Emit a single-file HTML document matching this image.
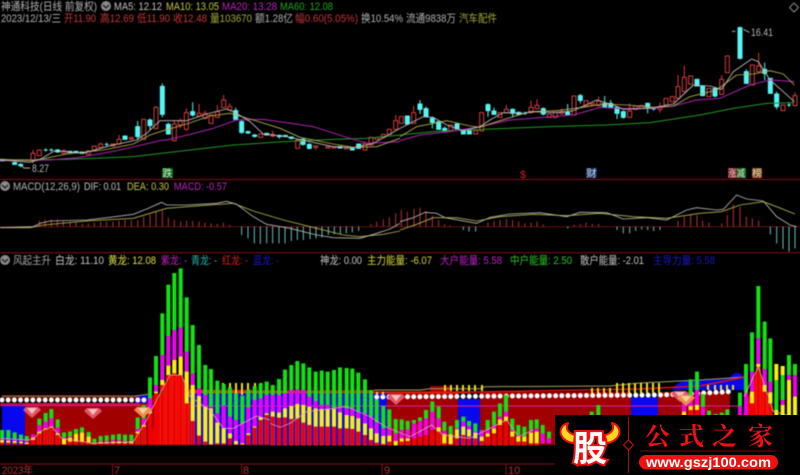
<!DOCTYPE html>
<html><head><meta charset="utf-8"><style>
html,body{margin:0;padding:0;background:#000;width:800px;height:475px;overflow:hidden}
svg{display:block}
text{font-family:"Liberation Sans","Noto Sans CJK SC",sans-serif;font-size:11px}
.b{filter:blur(.4px)}
path,polyline{fill:none;stroke-linejoin:round}
</style></head><body>
<svg width="800" height="475" viewBox="0 0 800 475">
<rect width="800" height="475" fill="#000"/>
<g class="b">
<!-- separators -->
<path d="M0 179.5H800M0 252.7H800M0 464H800" stroke="#8a1010" stroke-width="1"/>
<path d="M0 226.7H800" stroke="#6a1010" stroke-width="1"/>
<path d="M112.5 464V475M241.7 464V475M382 464V475M506 464V475" stroke="#8a1010"/>

<!-- header text -->
<text x="1" y="10" textLength="96" lengthAdjust="spacingAndGlyphs" fill="#b4b4b4">神通科技(日线 前复权)</text>
<circle cx="106" cy="6" r="5" fill="#8a8a8a"/><path d="M103 5l3 3 3-3" stroke="#222" stroke-width="1.3"/>
<text x="114" y="10" textLength="48" lengthAdjust="spacingAndGlyphs" fill="#c4c4c4">MA5: 12.12</text>
<text x="166" y="10" textLength="53" lengthAdjust="spacingAndGlyphs" fill="#c8c840">MA10: 13.05</text>
<text x="222" y="10" textLength="55" lengthAdjust="spacingAndGlyphs" fill="#c020c0">MA20: 13.28</text>
<text x="280" y="10" textLength="53" lengthAdjust="spacingAndGlyphs" fill="#20a820">MA60: 12.08</text>
<text x="1" y="22" textLength="60" lengthAdjust="spacingAndGlyphs" fill="#b4b4b4">2023/12/13/三</text>
<text x="64" y="22" textLength="32" lengthAdjust="spacingAndGlyphs" fill="#c83434">开11.90</text>
<text x="100" y="22" textLength="34" lengthAdjust="spacingAndGlyphs" fill="#c83434">高12.69</text>
<text x="137" y="22" textLength="33" lengthAdjust="spacingAndGlyphs" fill="#c83434">低11.90</text>
<text x="173" y="22" textLength="34" lengthAdjust="spacingAndGlyphs" fill="#c83434">收12.48</text>
<text x="210" y="22" textLength="42" lengthAdjust="spacingAndGlyphs" fill="#a8a838">量103670</text>
<text x="255" y="22" textLength="38" lengthAdjust="spacingAndGlyphs" fill="#b4b4b4">额1.28亿</text>
<text x="295" y="22" textLength="63" lengthAdjust="spacingAndGlyphs" fill="#c83434">幅0.60(5.05%)</text>
<text x="361" y="22" textLength="42" lengthAdjust="spacingAndGlyphs" fill="#b4b4b4">换10.54%</text>
<text x="406" y="22" textLength="50" lengthAdjust="spacingAndGlyphs" fill="#b4b4b4">流通9838万</text>
<text x="459" y="22" textLength="38" lengthAdjust="spacingAndGlyphs" fill="#a8a838">汽车配件</text>

<!-- Top chart, left half -->
<g transform="scale(.33333)" stroke-width="3">
<path stroke="#d83a3a" d="M99 450V490M192 448V462M265 450V466M302 428V445M357 405V434M394 410V420M468 318V388M523 360V425M541 355V385M559 325V392M597 312V350M615 332V358M652 315V354M671 285V325M689 310V332M818 392V412M947 436V450M1187 345V390M1095 425V452"/>
<path stroke="#d83a3a" style="fill:#000" d="M93 460h12v20h-12zM112 450h12v17h-12zM186 452h12v8h-12zM259 453h12v10h-12zM277 438h12v15h-12zM296 432h12v11h-12zM333 432h12v6h-12zM351 418h12v14h-12zM388 413h12v4h-12zM425 358h12v60h-12zM462 322h12v63h-12zM517 372h12v50h-12zM535 362h12v13h-12zM553 338h12v50h-12zM591 340h12v8h-12zM609 340h12v15h-12zM627 345h12v25h-12zM646 335h12v17h-12zM665 300h12v23h-12zM683 320h12v10h-12zM776 402h12v10h-12zM812 403h12v5h-12zM887 420h12v25h-12zM941 438h12v4h-12zM978 440h12v4h-12zM996 440h12v4h-12zM1033 443h12v4h-12zM1089 430h12v20h-12zM1107 412h12v23h-12zM1125 412h12v6h-12zM1144 403h12v9h-12zM1162 388h12v15h-12zM1181 362h12v26h-12z"/>
<path stroke="#54f4f4" d="M413 363V420M450 355V390M487 250V352M505 368V404M578 307V350M707 323V362M725 360V402M744 392V402M764 402V413M131 450h12M137 445v10M148 450h12M154 445v10M173 447v11M314 433h12M320 428v11M838 404v12M874 410v8M909 415v22M928 430v18M0 480h12M44 485v10M62 490v12"/>
<path stroke="#54f4f4" style="fill:#54f4f4" d="M0 478h12v5h-12zM38 488h12v5h-12zM56 493h12v4h-12zM167 450h12v6h-12zM204 454h12v4h-12zM222 454h12v4h-12zM240 456h12v4h-12zM369 408h12v10h-12zM407 380h12v30h-12zM444 360h12v17h-12zM481 259h12v84h-12zM499 373h12v29h-12zM572 335h12v10h-12zM701 332h12v26h-12zM719 365h12v32h-12zM738 395h12v4h-12zM758 405h12v4h-12zM794 400h12v5h-12zM832 406h12v4h-12zM850 406h12v4h-12zM868 411h12v4h-12zM903 418h12v15h-12zM922 433h12v12h-12zM1014 440h12v4h-12zM1051 446h12v4h-12zM1070 432h12v13h-12z"/>
<polyline stroke="#1e9a1e" points="0,480 200,478 400,470 700,435 850,425 1000,418 1100,415 1200,405"/>
<polyline stroke="#b020b0" points="0,482 150,480 240,472 360,450 480,422 510,418 640,385 710,360 790,358 940,380 1040,412 1100,430 1200,425"/>
<polyline stroke="#b4b448" stroke-width="2.6" points="0,478 100,482 200,462 310,450 400,432 450,405 490,392 560,372 630,348 690,340 760,360 840,385 900,412 1000,432 1060,442 1130,440 1200,415"/>
<polyline stroke="#bcbcbc" stroke-width="2.6" points="0,480 90,487 120,478 165,452 250,460 330,437 410,420 440,400 480,362 560,362 620,342 680,327 710,340 750,365 790,402 860,410 930,425 1000,440 1060,443 1120,430 1200,385"/>
<path stroke="#b0b0b0" d="M65 498L72 504H90"/>
</g>
<text x="32" y="172" textLength="17" lengthAdjust="spacingAndGlyphs" fill="#b4b4b4">8.27</text>

<!-- Top chart, right half -->
<g transform="translate(400 0) scale(.33333)" stroke-width="3">
<path stroke="#d83a3a" d="M41 318V372M319 315V340M393 302V340M411 298V328M485 325V345M596 290V319M689 310V354M780 308V338M834 225V297M853 197V277M965 225V285M1076 158V217M1185 277V319"/>
<path stroke="#d83a3a" style="fill:#000" d="M-2 350h12v20h-12zM35 338h12v32h-12zM146 375h12v17h-12zM221 392h12v10h-12zM239 338h12v55h-12zM294 338h12v14h-12zM313 328h12v10h-12zM387 322h12v16h-12zM405 316h12v10h-12zM442 342h12v10h-12zM460 333h12v19h-12zM479 335h12v5h-12zM516 288h12v57h-12zM552 302h12v16h-12zM571 310h12v5h-12zM590 303h12v14h-12zM683 333h12v19h-12zM701 318h12v10h-12zM719 316h12v9h-12zM774 320h12v8h-12zM792 295h12v20h-12zM811 290h12v15h-12zM828 260h12v35h-12zM847 232h12v43h-12zM866 228h12v24h-12zM921 265h12v25h-12zM959 238h12v45h-12zM976 168h12v50h-12zM1051 195h12v60h-12zM1070 198h12v17h-12zM1143 315h12v17h-12zM1179 287h12v30h-12z"/>
<path stroke="#54f4f4" d="M60 300V342M78 320V352M97 350V385M134 380V396M264 310V350M282 323V345M338 325V352M356 335V346M369 340h12M375 335v10M430 322V346M503 312V347M541 282V310M614 288V324M632 300V324M651 318V357M670 332V356M743 308V340M755 327h12M761 322v10M945 262V292M1020 80V178M1039 208V252M1094 188V240M1130 275V328M1161 315h12M1167 309v12"/>
<path stroke="#b0b0b0" d="M996 94h10M1030 88L1048 97"/>
<path stroke="#54f4f4" style="fill:#54f4f4" d="M16 348h12v24h-12zM54 312h12v16h-12zM72 326h12v24h-12zM91 355h12v12h-12zM110 365h12v23h-12zM128 385h12v8h-12zM165 372h12v15h-12zM184 390h12v12h-12zM202 392h12v10h-12zM258 314h12v18h-12zM276 333h12v10h-12zM332 328h12v12h-12zM350 337h12v6h-12zM424 326h12v16h-12zM497 337h12v8h-12zM535 287h12v14h-12zM608 310h12v12h-12zM626 310h12v12h-12zM645 322h12v18h-12zM664 335h12v17h-12zM737 310h12v12h-12zM885 238h12v20h-12zM902 258h12v29h-12zM939 265h12v23h-12zM1014 83h12v92h-12zM1033 215h12v35h-12zM1088 208h12v12h-12zM1105 235h12v45h-12zM1124 282h12v38h-12z"/>
<polyline stroke="#1e9a1e" points="0,405 100,395 250,388 450,380 620,375 750,368 900,345 1000,325 1100,310 1183,308"/>
<polyline stroke="#b020b0" points="0,422 60,405 150,395 240,380 330,360 430,352 520,345 600,322 650,325 760,325 820,318 890,300 960,295 1050,255 1110,240 1183,245"/>
<polyline stroke="#b4b448" stroke-width="2.6" points="0,410 50,380 140,362 210,378 240,382 300,362 390,335 470,332 550,322 610,312 680,315 760,322 820,318 870,290 950,270 1010,225 1060,222 1110,212 1150,222 1183,255"/>
<polyline stroke="#bcbcbc" stroke-width="2.6" points="0,385 40,365 70,350 100,352 140,375 190,392 240,380 270,360 310,338 370,340 400,335 470,338 520,332 590,300 640,315 670,328 750,325 820,312 880,255 930,258 965,268 1000,215 1055,177 1075,185 1110,240 1150,275 1183,305"/>
</g>
<text x="751" y="36" textLength="22" lengthAdjust="spacingAndGlyphs" fill="#b4b4b4">16.41</text>
<path d="M794 3l4.5 4.5L794 12l-4.5-4.5z" stroke="#888"/>

<!-- events -->
<rect x="162" y="168" width="11" height="10" fill="#006a10"/><text x="162.5" y="177" textLength="10" lengthAdjust="spacingAndGlyphs" fill="#e8e8e8" style="font-size:10px">跌</text>
<text x="520" y="178" textLength="6" lengthAdjust="spacingAndGlyphs" fill="#d02020" style="font-size:10px">$</text>
<rect x="586" y="168" width="11" height="10" fill="#103468"/><text x="586.5" y="177" textLength="10" lengthAdjust="spacingAndGlyphs" fill="#e0e0e0" style="font-size:10px">财</text>
<rect x="728" y="168" width="9" height="10" fill="#801818"/><rect x="737" y="168" width="9" height="10" fill="#107020"/>
<text x="728" y="177" textLength="17" lengthAdjust="spacingAndGlyphs" fill="#e0e0e0" style="font-size:10px">涨减</text>
<rect x="752" y="168" width="10" height="10" fill="#7a4a18"/><text x="752" y="177" textLength="10" lengthAdjust="spacingAndGlyphs" fill="#e8d8c0" style="font-size:10px">榜</text>

<!-- MACD header -->
<circle cx="5" cy="186" r="5" fill="#8a8a8a"/><path d="M2 185l3 3 3-3" stroke="#222" stroke-width="1.3"/>
<text x="13" y="190" textLength="67" lengthAdjust="spacingAndGlyphs" fill="#b4b4b4">MACD(12,26,9)</text>
<text x="84" y="190" textLength="37" lengthAdjust="spacingAndGlyphs" fill="#c4c4c4">DIF: 0.01</text>
<text x="127" y="190" textLength="42" lengthAdjust="spacingAndGlyphs" fill="#c8c840">DEA: 0.30</text>
<text x="174" y="190" textLength="53" lengthAdjust="spacingAndGlyphs" fill="#c020c0">MACD: -0.57</text>

<!-- MACD chart -->
<g transform="translate(0 175) scale(.33333)" stroke-width="3">
<path stroke="#b83030" d="M118 155V137M135 155V135M154 155V133M172 155V133M190 155V137M210 155V140M228 155V143M247 155V146M265 155V146M283 155V143M302 155V140M320 155V140M339 155V140M357 155V137M375 155V135M394 155V135M413 155V135M431 155V125M450 155V118M468 155V110M487 155V106M505 155V128M523 155V135M542 155V140M560 155V137M578 155V138M597 155V140M615 155V143M633 155V145M652 155V147M670 155V143M689 155V150M1113 155V148M1130 155V140M1150 155V133M1168 155V127M1187 155V115"/>
<path stroke="#6ebcbc" d="M725 155V180M744 155V190M763 155V205M781 155V207M800 155V205M818 155V205M837 155V205M855 155V205M874 155V198M892 155V195M910 155V195M930 155V192M948 155V190M966 155V187M985 155V180M1003 155V178M1021 155V177M1039 155V175M1057 155V172M1076 155V168"/>
<polyline stroke="#b4b448" stroke-width="2.6" points="0,158 90,158 130,150 270,137 400,130 450,115 500,100 600,92 700,85 760,108 850,135 950,160 1030,180 1080,185 1150,178 1200,168"/>
<polyline stroke="#b8b8b8" stroke-width="2.6" points="0,158 100,155 120,145 150,138 260,135 330,127 400,118 440,102 485,82 500,90 560,90 650,85 680,79 710,88 760,125 800,148 870,160 950,180 1000,188 1080,190 1130,175 1170,162 1200,145"/>
</g>
<g transform="translate(400 175) scale(.33333)" stroke-width="3">
<path stroke="#b83030" d="M4 155V105M22 155V110M42 155V101M60 155V98M78 155V108M97 155V122M116 155V135M134 155V148M150 155V152M264 155V142M282 155V138M300 155V135M319 155V132M338 155V135M356 155V140M375 155V145M393 155V143M411 155V140M430 155V148M522 155V150M541 155V147M558 155V143M577 155V147M596 155V147M834 155V138M853 155V125M872 155V118M891 155V120M908 155V137M927 155V142M965 155V145M982 155V120M1000 155V88M1020 155V95M1039 155V125M1057 155V130M1076 155V137"/>
<path stroke="#6ebcbc" d="M190 155V165M207 155V170M227 155V170M503 155V160M651 155V165M670 155V175M689 155V175M707 155V168M725 155V163M743 155V165M761 155V168M780 155V165M1111 155V178M1130 155V205M1149 155V222M1167 155V230M1185 155V220"/>
<polyline stroke="#b8b8b8" stroke-width="2.6" points="0,140 40,128 75,112 110,115 135,128 230,145 270,127 330,117 420,113 500,125 540,112 620,113 670,132 740,128 800,135 860,105 890,98 950,105 970,103 1010,60 1040,72 1090,78 1130,125 1170,150 1190,155"/>
<polyline stroke="#b4b448" stroke-width="2.6" points="0,165 50,148 100,128 170,128 230,138 300,125 400,118 500,122 600,115 700,125 800,130 900,115 965,110 1020,90 1090,80 1130,95 1185,117"/>
</g>

<!-- lower header -->
<circle cx="5" cy="260" r="5" fill="#8a8a8a"/><path d="M2 259l3 3 3-3" stroke="#222" stroke-width="1.3"/>
<text x="13" y="264" textLength="38" lengthAdjust="spacingAndGlyphs" fill="#a8a8a8">风起主升</text>
<text x="55" y="264" textLength="49" lengthAdjust="spacingAndGlyphs" fill="#c4c4c4">白龙: 11.10</text>
<text x="108" y="264" textLength="48" lengthAdjust="spacingAndGlyphs" fill="#e0e040">黄龙: 12.08</text>
<text x="161" y="264" textLength="26" lengthAdjust="spacingAndGlyphs" fill="#c020c8">紫龙: -</text>
<text x="191" y="264" textLength="26" lengthAdjust="spacingAndGlyphs" fill="#20b8b8">青龙: -</text>
<text x="222" y="264" textLength="26" lengthAdjust="spacingAndGlyphs" fill="#d82020">红龙: -</text>
<text x="253" y="264" textLength="26" lengthAdjust="spacingAndGlyphs" fill="#1818c8">蓝龙: -</text>
<text x="320" y="264" textLength="42" lengthAdjust="spacingAndGlyphs" fill="#c4c4c4">神龙: 0.00</text>
<text x="367" y="264" textLength="65" lengthAdjust="spacingAndGlyphs" fill="#d8d840">主力能量: -6.07</text>
<text x="440" y="264" textLength="62" lengthAdjust="spacingAndGlyphs" fill="#c020c8">大户能量: 5.58</text>
<text x="510" y="264" textLength="62" lengthAdjust="spacingAndGlyphs" fill="#28c828">中户能量: 2.50</text>
<text x="580" y="264" textLength="64" lengthAdjust="spacingAndGlyphs" fill="#c4c4c4">散户能量: -2.01</text>
<text x="653" y="264" textLength="62" lengthAdjust="spacingAndGlyphs" fill="#1818c8">主导力量: 5.58</text>

<!-- lower backgrounds -->
<rect x="2" y="405" width="23" height="40" fill="#0808f0"/>
<rect x="25" y="403" width="125" height="42" fill="#a00000"/>
<rect x="135" y="395" width="15" height="8" fill="#0808f0"/>
<rect x="150" y="395" width="37" height="50" fill="#a00000"/>
<rect x="187" y="392" width="200" height="53" fill="#0808f0"/>
<rect x="387" y="392" width="71" height="53" fill="#a00000"/>
<rect x="458" y="399" width="22" height="46" fill="#0808f0"/>
<rect x="430" y="386" width="20" height="6" fill="#a00000"/>
<rect x="480" y="392" width="151" height="53" fill="#a00000"/>
<rect x="631" y="397" width="27" height="46" fill="#0808f0"/>
<rect x="658" y="392" width="72" height="50" fill="#a00000"/>
<path d="M672 389C676 384 680 382 684 381L730 378C732 373 740 370 745 378V390H672z" stroke="none" style="fill:#0808f0"/>
<!-- horizontal lines -->
<path d="M0 405.5H150M150 406H740" stroke="#e020a0" stroke-width="1"/>
<path d="M0 404H140" stroke="#e01050" stroke-width="1.5"/>
<path d="M2 396H135L150 394" stroke="#a09050" stroke-width="1"/>
<path d="M2 397.5H140" stroke="#e01010" stroke-width="1"/>
<path d="M187 391H374M187 392.5H470" stroke="#e04010" stroke-width="1.5"/>
<path d="M374 390H420L430 388.7H480L485 386.7L610 386L640 383L700 380L745 377" stroke="#a0a060" stroke-width="1"/>
<path d="M187 390L374 392L480 392L640 389L700 386L730 380L745 377" stroke="#e01010" stroke-width="1.5"/>
<!-- dots -->
<path d="M2 400H145" stroke="#fff" stroke-width="5" stroke-linecap="round" stroke-dasharray="0 6.17"/>
<path d="M155 398H376" stroke="#ddd" stroke-width="2" stroke-linecap="round" stroke-dasharray="0 6.17"/>
<path d="M376.7 397L660 395L705 393L733 391.5" stroke="#fff" stroke-width="5" stroke-linecap="round" stroke-dasharray="0 6.17"/>
<!-- pins -->
<path d="M223 383V395M230 383V395M236 383V395M242 383V395M248 383V395M255 383V395M261 383V395M267 383V395M445 385V391M451 385V391M457 385V391M463 385V391M469 385V391M475 385V391M482 385V391M377 392V396M383 392V396M592 388V393M598 388V393M604 388V393M610 388V393M617 383V393M623 383V393M629 383V393M635 383V393M641 383V393M647 383V393M653 383V393M659 383V393M708 385V390M715 385V390M721 385V390M727 385V390M733 385V390" stroke="#f0e020" stroke-width="2"/>

<!-- red fills -->
<path d="M160 393L170 375H182L190 403L190 445H150z" stroke="none" style="fill:#f00000"/>
<path d="M758 366L743 415H773z" stroke="none" style="fill:#f00000"/>

<!-- bars part 1 -->
<g transform="translate(0 260) scale(.33333)" stroke-width="12">
<path stroke="#14e014" d="M6 510V555M25 510V555M44 517V555M63 524V555M80 528V555M118 476V555M137 459V555M154 447V555M173 478V555M192 517V555M210 514V555M228 507V555M246 502V555M266 516V555M283 536V555M302 528V555M320 526V555M339 524V555M357 522V555M375 524V555M394 524V555M413 472V555M431 435V555M450 352V555M468 288V555M487 160V555M505 74V555M523 39V555M542 25V555M560 112V555M578 195V555M597 255V555M616 315V555M633 327V555M652 362V555M671 372V555M690 382V555M708 400V555M727 407V555M745 388V555M764 378V555M782 370V555M800 365V555"/>
<path stroke="#f000f0" d="M6 535V555M25 535V555M44 537V555M63 540V555M80 542V555M99 523V555M118 495V555M137 485V555M154 475V555M173 502V555M192 533V555M210 530V555M228 522V555M246 517V555M266 530V555M283 548V555M302 543V555M320 543V555M339 540V555M357 540V555M375 543V555M394 543V555M413 507V555M431 475V555M450 415V555M468 375V555M487 285V555M505 228V555M523 210V555M542 203V555M560 275V555M578 340V555M597 385V555M616 405V555M633 440V555M652 460V555M671 437V555M690 470V555M708 480V555M727 490V555M745 443V555M764 420V555M782 415V555M800 405V555"/>
<path stroke="#f8f010" d="M6 540V555M25 542V555M44 543V555M63 545V555M80 548V555M99 533V555M118 515V555M137 505V555M154 500V555M173 520V555M192 537V555M210 533V555M228 522V555M246 518V555M266 530V555M283 550V555M302 546V555M320 546V555M339 545V555M357 544V555M375 546V555M394 546V555M413 515V555M431 495V555M450 455V555M468 395V555M487 360V555M505 317V555M523 300V555M542 290V555M560 335V555M578 375V555M597 408V555M616 440V555M633 445V555M652 488V555M671 505V555M690 520V555M708 543V555M727 550V555M745 520V555M764 500V555M782 472V555M800 460V555"/>
<path stroke="#f00000" d="M6 548V555M25 548V555M44 549V555M63 550V555M80 552V555M99 540V555M118 520V555M137 508V555M154 503V555M173 525V555M192 553V555M210 545V555M228 545V555M246 545V555M266 547V555M283 552V555M302 550V555M320 550V555M339 550V555M357 550V555M375 550V555M394 550V555M413 520V555M431 500V555M450 460V555M468 400V555M487 375V555M505 345V555M523 340V555M542 345V555M560 430V555M578 483V555M597 527V555M616 545V555M633 553V555M652 550V555M671 550V555M690 535V555M708 553V555M727 553V555M745 525V555M764 503V555M782 480V555M800 465V555"/>
<polyline stroke="#e0b0b0" stroke-width="2.2" points="0,535 80,540 100,538 120,515 155,500 185,535 280,550 400,545 440,480 480,400 510,345 545,345 570,410 630,450 670,505 700,505 770,468 810,480"/>
</g>
<!-- bars part 2 -->
<g transform="translate(270 340) scale(.33333)" stroke-width="12">
<path stroke="#14e014" d="M8 135V316M27 117V316M45 89V316M64 75V316M82 63V316M100 70V316M118 82V316M137 95V316M155 92V316M173 95V316M192 90V316M210 82V316M230 84V316M247 86V316M265 98V316M285 118V316M303 150V316M320 178V316M340 198V316M358 208V316M377 237V316M395 238V316M413 243V316M432 240V316M450 232V316M468 210V316M487 184V316M506 200V316M523 245V316M542 258V316M561 240V316M580 230V316M597 243V316M616 250V316M635 270V316M653 240V316M672 215V316M690 190V316M708 165V316M727 236V316M745 255V316M763 260V316M783 240V316M800 238V316"/>
<path stroke="#f000f0" d="M8 165V316M27 165V316M45 160V316M64 150V316M82 148V316M100 150V316M118 170V316M137 183V316M155 195V316M173 195V316M192 205V316M210 200V316M230 205V316M247 205V316M265 215V316M285 220V316M303 230V316M320 247V316M340 265V316M358 262V316M377 280V316M395 270V316M413 268V316M432 250V316M450 243V316M468 235V316M487 215V316M506 235V316M523 272V316M542 283V316M561 265V316M580 245V316M597 258V316M616 275V316M635 272V316M653 268V316M672 255V316M690 230V316M708 215V316M727 270V316M745 285V316M763 290V316M783 270V316M800 265V316"/>
<path stroke="#f8f010" d="M8 215V316M27 218V316M45 205V316M64 198V316M82 192V316M100 195V316M118 200V316M137 205V316M155 207V316M173 208V316M192 207V316M210 217V316M230 225V316M247 228V316M265 235V316M285 250V316M303 265V316M320 280V316M340 288V316M358 287V316M377 303V316M395 295V316M413 295V316M506 262V316M523 282V316M542 283V316M561 268V316M580 260V316M597 268V316M616 278V316M635 290V316M653 280V316M672 265V316M690 238V316M708 230V316M727 275V316M745 290V316M763 290V316M783 278V316M800 275V316"/>
<path stroke="#f00000" d="M8 230V316M27 233V316M45 232V316M64 237V316M82 235V316M100 248V316M118 255V316M137 260V316M155 260V316M173 260V316M192 260V316M210 265V316M230 265V316M247 267V316M265 275V316M285 285V316M303 300V316M320 308V316M340 312V316M358 305V316M395 305V316M413 303V316M432 295V316M450 290V316M468 285V316M487 270V316M506 275V316M523 310V316M542 312V316M561 295V316M580 285V316M597 290V316M616 295V316M635 303V316M653 290V316M672 280V316M690 255V316M708 243V316M727 290V316M745 305V316M763 305V316M783 310V316M800 310V316"/>
<polyline stroke="#e0b0b0" stroke-width="2.2" points="0,250 30,262 60,250 110,215 190,205 230,200 300,230 350,262 420,290 485,255 520,285 600,295 710,240 745,290 790,270"/>
</g>
<!-- bars part 3 -->
<g transform="translate(540 270) scale(.33333)" stroke-width="12">
<path stroke="#14e014" d="M8 465V520M27 485V520M155 425V520M175 405V520M452 328V500M471 305V500M489 372V500M507 422V500M527 432V500M545 428V500M562 418V500M600 368V500M618 282V500M636 187V500M655 48V500M674 155V500M691 205V500M709 330V420M728 315V390M747 255V500M765 282V500"/>
<path stroke="#f000f0" d="M8 490V520M27 505V520M432 395V500M452 375V500M471 360V500M489 410V500M600 408V500M618 368V500M636 305V500M655 205V500M674 297V500M691 335V500M728 390V405M747 315V500M765 315V500"/>
<path stroke="#f8f010" d="M432 425V500M452 408V500M471 405V500M636 365V500M655 282V500M674 345V500M691 367V500M709 282V330M709 420V500M728 288V315M728 405V500M747 330V500M765 380V500"/>
<path stroke="#f00000" d="M452 420V500M471 420V500M636 400V500M655 290V500M674 365V500M691 400V500"/>
<polyline stroke="#e8c8a0" stroke-width="2.2" points="612,380 655,290 700,425 740,435"/>
</g>
<!-- diamonds -->
<g stroke="none">
<path style="fill:#e05868" d="M26 407h12l3 3-9 8-9-8z"/><path style="fill:#f8c0c0" d="M27 408h10l-5 6z"/>
<path style="fill:#e05868" d="M87 408h12l3 3-9 8-9-8z"/><path style="fill:#f8c0c0" d="M88 409h10l-5 6z"/>
<path style="fill:#e8904a" d="M137 407h12l3 3-9 8-9-8z"/><path style="fill:#f8d0a0" d="M138 408h10l-5 6z"/>
<path style="fill:#e05868" d="M390 394h12l3 3-9 8-9-8z"/><path style="fill:#f8c0c0" d="M391 395h10l-5 6z"/>
<path style="fill:#e05868" d="M674 391h12l3 3-9 8-9-8z"/><path style="fill:#f8c0c0" d="M675 392h10l-5 6z"/>
<path style="fill:#e8904a" d="M680 395h12l3 3-9 8-9-8z"/><path style="fill:#f8d0a0" d="M681 396h10l-5 6z"/>
</g>
<!-- axis -->
<text x="2" y="474" textLength="31" lengthAdjust="spacingAndGlyphs" fill="#b03030">2023年</text>
<text x="114" y="474" fill="#b03030">7</text>
<text x="243" y="474" fill="#b03030">8</text>
<text x="384" y="474" fill="#b03030">9</text>
<text x="508" y="474" fill="#b03030">10</text>
</g>

<!-- logo -->
<rect x="555" y="415" width="245" height="60" fill="#000"/>
<path d="M563 438C558 432 561 425 568 423C565 429 568 433 575 435L574 443C570 443 566 441 563 438z" style="fill:#f8d820" stroke="#f01010" stroke-width="2"/>
<path d="M617 438C622 432 619 425 612 423C615 429 612 433 605 435L606 443C610 443 614 441 617 438z" style="fill:#f8d820" stroke="#f01010" stroke-width="2"/>
<text x="573" y="461" textLength="34" lengthAdjust="spacingAndGlyphs" fill="#fff" stroke="#f01010" stroke-width="4" paint-order="stroke" style="font-family:'Noto Sans CJK SC',sans-serif;font-size:35px;font-weight:700">股</text>
<path d="M628.5 417V473" stroke="#a01010" stroke-width="1"/>
<path d="M628.5 440l5 5-5 5-5-5z" stroke="#d01010" style="fill:#000"/>
<text x="645" y="445" fill="#f01010" style="font-family:'Noto Serif CJK SC',serif;font-size:25px;font-weight:700">公</text>
<text x="679" y="445" fill="#f01010" style="font-family:'Noto Serif CJK SC',serif;font-size:25px;font-weight:700">式</text>
<text x="712" y="445" fill="#f01010" style="font-family:'Noto Serif CJK SC',serif;font-size:25px;font-weight:700">之</text>
<text x="748" y="445" fill="#f01010" style="font-family:'Noto Serif CJK SC',serif;font-size:25px;font-weight:700">家</text>
<path d="M640 451H776" stroke="#701010" stroke-width="1"/>
<rect x="639" y="455" width="139" height="14.5" rx="7.2" fill="#f01010"/>
<text x="646" y="467" textLength="125" lengthAdjust="spacingAndGlyphs" fill="#fff" style="font-size:13.5px;font-weight:700">www.gszj100.com</text>
</svg>
</body></html>
